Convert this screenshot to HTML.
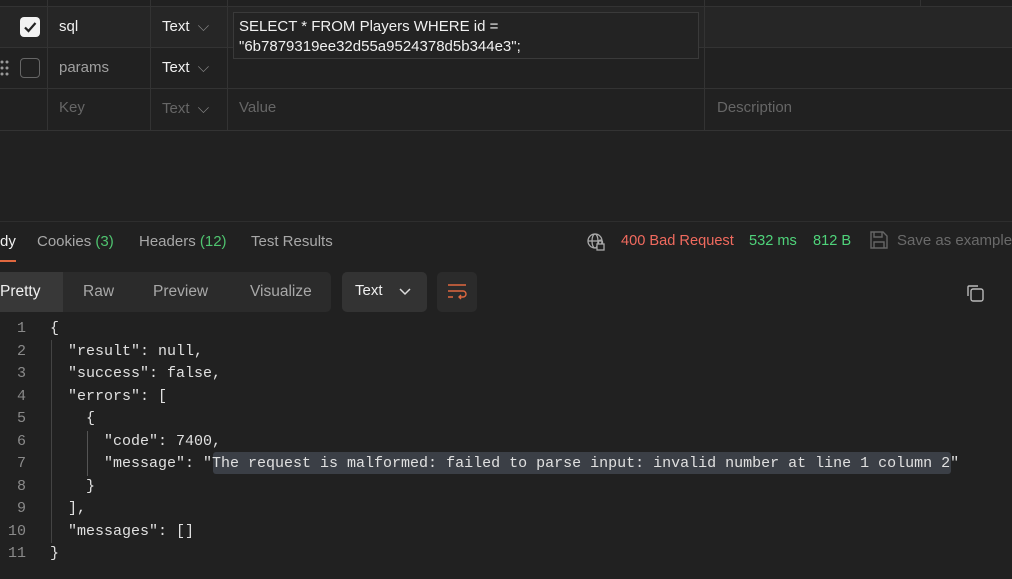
<!DOCTYPE html>
<html><head><meta charset="utf-8"><style>
*{margin:0;padding:0;box-sizing:border-box}
body{width:1012px;height:579px;background:#212121;overflow:hidden;position:relative;font-family:"Liberation Sans",sans-serif;font-size:15px;color:#e6e6e6}
.a{position:absolute;white-space:nowrap}
.hl{position:absolute;height:1px;background:#333}
.vl{position:absolute;width:1px;background:#333}
.code{position:absolute;left:0;top:318px;font-family:"Liberation Mono",monospace;font-size:15px;color:#e0e0e0}
.ln{position:absolute;width:26px;text-align:right;color:#8a8a8a;font-size:15px}
.cl{position:absolute;white-space:pre}
</style></head><body>
<div class="a" style="left:0;top:7px;width:1012px;height:40px;background:#262626"></div>
<div class="hl" style="left:0;top:6px;width:1012px"></div>
<div class="hl" style="left:0;top:47px;width:1012px"></div>
<div class="hl" style="left:0;top:88px;width:1012px"></div>
<div class="hl" style="left:0;top:130px;width:1012px"></div>
<div class="vl" style="left:47px;top:0;height:130px"></div>
<div class="vl" style="left:150px;top:0;height:130px"></div>
<div class="vl" style="left:227px;top:0;height:130px"></div>
<div class="vl" style="left:704px;top:0;height:130px"></div>
<div class="vl" style="left:920px;top:0;height:6px"></div>
<div class="a" style="left:20px;top:17px;width:20px;height:20px;background:#f2f2f2;border-radius:4px"><svg width="20" height="20"><path d="M5 10.5l3.5 3.5 7-8" stroke="#222" stroke-width="2.2" fill="none"/></svg></div>
<div class="a" style="left:20px;top:58px;width:20px;height:20px;border:1px solid #666;border-radius:4px"></div>
<svg class="a" style="left:0;top:59px" width="10" height="20"><g fill="#999"><circle cx="2" cy="3" r="1.5"/><circle cx="7" cy="3" r="1.5"/><circle cx="2" cy="9" r="1.5"/><circle cx="7" cy="9" r="1.5"/><circle cx="2" cy="15" r="1.5"/><circle cx="7" cy="15" r="1.5"/></g></svg>
<div class="a" style="left:59px;top:18px;color:#f0f0f0">sql</div>
<div class="a" style="left:59px;top:59px;color:#a0a0a0">params</div>
<div class="a" style="left:59px;top:99px;color:#666">Key</div>
<div class="a" style="left:162px;top:18px;color:#f0f0f0">Text <span style="color:#888;margin-left:4px">⌵</span></div>
<div class="a" style="left:162px;top:59px;color:#f0f0f0">Text <span style="color:#888;margin-left:4px">⌵</span></div>
<div class="a" style="left:162px;top:100px;color:#666">Text <span style="color:#888;margin-left:4px">⌵</span></div>
<div class="a" style="left:233px;top:12px;width:466px;height:47px;background:#232323;border:1px solid #3a3a3a"></div>
<div class="a" style="left:239px;top:17px;color:#f0f0f0;line-height:20px">SELECT * FROM Players WHERE id =<br>"6b7879319ee32d55a9524378d5b344e3";</div>
<div class="a" style="left:239px;top:99px;color:#666">Value</div>
<div class="a" style="left:717px;top:99px;color:#666">Description</div>
<div class="hl" style="left:0;top:221px;width:1012px;background:#2e2e2e"></div>
<div class="a" style="left:0;top:233px;color:#f0f0f0">dy</div>
<div class="a" style="left:0;top:260px;width:16px;height:2px;background:#e0683f"></div>
<div class="a" style="left:37px;top:233px;color:#a8a8a8">Cookies <span style="color:#4fc36f">(3)</span></div>
<div class="a" style="left:139px;top:233px;color:#a8a8a8">Headers <span style="color:#4fc36f">(12)</span></div>
<div class="a" style="left:251px;top:233px;color:#a8a8a8">Test Results</div>
<svg class="a" style="left:586px;top:232px" width="22" height="20" fill="none" stroke="#aaa" stroke-width="1.3"><circle cx="9" cy="9" r="7"/><ellipse cx="9" cy="9" rx="3" ry="7"/><path d="M2 9h14"/><rect x="11" y="12" width="7" height="6" fill="#212121"/><path d="M12.5 12v-2a2 2 0 0 1 4 0v2"/></svg>
<div class="a" style="left:621px;top:233px;color:#f06a5e;font-size:14.6px">400 Bad Request</div>
<div class="a" style="left:749px;top:233px;color:#4fd37a;font-size:14.6px">532 ms</div>
<div class="a" style="left:813px;top:233px;color:#4fd37a;font-size:14.6px">812 B</div>
<svg class="a" style="left:869px;top:230px" width="20" height="20" fill="none" stroke="#666" stroke-width="1.4"><path d="M2 2h12l4 4v12H2z"/><path d="M5 2v5h8V2M5 18v-6h10v6"/></svg>
<div class="a" style="left:897px;top:232px;color:#6a6a6a">Save as example</div>
<div class="a" style="left:0;top:272px;width:331px;height:40px;background:#2b2b2b;border-radius:0 5px 5px 0"></div>
<div class="a" style="left:0;top:272px;width:63px;height:40px;background:#383838"></div>
<div class="a" style="left:0;top:283px;color:#f0f0f0;font-size:15.5px">Pretty</div>
<div class="a" style="left:83px;top:283px;color:#a8a8a8;font-size:15.5px">Raw</div>
<div class="a" style="left:153px;top:283px;color:#a8a8a8;font-size:15.5px">Preview</div>
<div class="a" style="left:250px;top:283px;color:#a8a8a8;font-size:15.5px">Visualize</div>
<div class="a" style="left:342px;top:272px;width:85px;height:40px;background:#333;border-radius:5px"></div>
<div class="a" style="left:355px;top:282px;color:#f0f0f0">Text</div>
<svg class="a" style="left:398px;top:286px" width="14" height="12" fill="none" stroke="#ddd" stroke-width="1.5"><path d="M2 3l5 5 5-5"/></svg>
<div class="a" style="left:437px;top:272px;width:40px;height:40px;background:#2b2b2b;border-radius:5px"></div>
<svg class="a" style="left:447px;top:283px" width="22" height="18" fill="none" stroke="#e0683f" stroke-width="1.4"><path d="M1 2h18M1 8h15a3 3 0 0 1 0 6h-4M14 12l-2 2 2 2M1 14h5"/></svg>
<svg class="a" style="left:965px;top:283px" width="20" height="20" fill="none" stroke="#bbb" stroke-width="1.4"><rect x="6" y="6" width="12" height="12" rx="2"/><path d="M3 13V4a1 1 0 0 1 1-1h9"/></svg>
<div class="vl" style="left:51px;top:340px;height:203px;background:#444"></div>
<div class="vl" style="left:87px;top:431px;height:45px;background:#555"></div>
<div class="a" style="left:213px;top:452px;width:738px;height:22px;background:#3b3f46;border-radius:3px"></div>
<div class="code">
<div class="ln" style="top:2px">1</div><div class="cl" style="left:50px;top:2px">{</div>
<div class="ln" style="top:25px">2</div><div class="cl" style="left:50px;top:25px">  "result": null,</div>
<div class="ln" style="top:47px">3</div><div class="cl" style="left:50px;top:47px">  "success": false,</div>
<div class="ln" style="top:70px">4</div><div class="cl" style="left:50px;top:70px">  "errors": [</div>
<div class="ln" style="top:92px">5</div><div class="cl" style="left:50px;top:92px">    {</div>
<div class="ln" style="top:115px">6</div><div class="cl" style="left:50px;top:115px">      "code": 7400,</div>
<div class="ln" style="top:137px">7</div><div class="cl" style="left:50px;top:137px">      "message": "The request is malformed: failed to parse input: invalid number at line 1 column 2"</div>
<div class="ln" style="top:160px">8</div><div class="cl" style="left:50px;top:160px">    }</div>
<div class="ln" style="top:182px">9</div><div class="cl" style="left:50px;top:182px">  ],</div>
<div class="ln" style="top:205px">10</div><div class="cl" style="left:50px;top:205px">  "messages": []</div>
<div class="ln" style="top:227px">11</div><div class="cl" style="left:50px;top:227px">}</div>
</div>
</body></html>
